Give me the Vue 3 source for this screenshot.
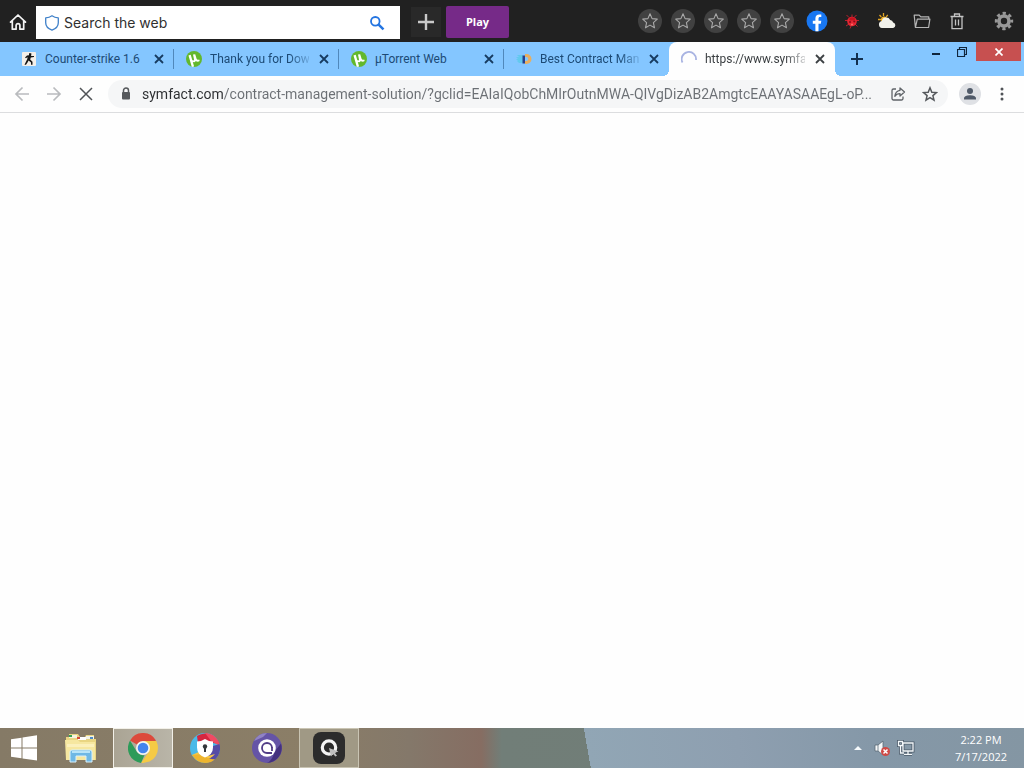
<script setup>
import { ref } from 'vue'

const address = ref('symfact.com/contract-management-solution/?gclid=EAIaIQobChMIrOutnMWA-QIVgDizAB2AmgtcEAAYASAAEgL-oP...')
const query = ref('')

const tabs = [
  { icon: 'cs', title: 'Counter-strike 1.6' },
  { icon: 'ut', title: 'Thank you for Dow', fade: true },
  { icon: 'ut', title: 'µTorrent Web' },
  { icon: 'bc', title: 'Best Contract Man', fade: true },
  { icon: 'load', title: 'https://www.symfa', fade: true, active: true },
]
</script>

<template>
  <div class="screen">
    <header class="launcher">
      <button class="home" aria-label="Home">
        <svg width="18" height="18" viewBox="0 0 18 18" fill="none" stroke="#f4f4f4" stroke-width="1.7" stroke-linejoin="round" stroke-linecap="round">
          <path d="M1.5 9.2 9 2l7.500 7.200M3.300 8v8.200h3.800v-3.700a1.900 1.900 0 0 1 3.800 0v3.700h3.800V8" />
        </svg>
      </button>
      <form class="search" @submit.prevent>
        <svg width="16" height="18" viewBox="0 0 16 18" fill="none" stroke="#3f80c9" stroke-width="1.300" stroke-linejoin="round">
          <path d="M8 1.800c2 1.500 4 2 6.300 2.100v4.800c0 3.400-2.500 6-6.300 7.500-3.800-1.500-6.300-4.100-6.300-7.500V3.900C4 3.800 6 3.300 8 1.800z" />
        </svg>
        <input v-model="query" type="text" aria-label="Search the web" placeholder="Search the web" />
        <button aria-label="Search">
          <svg width="16" height="16" viewBox="0 0 16 16" fill="none" stroke="#2374e1">
            <circle cx="6.300" cy="6.300" r="4.300" stroke-width="1.800" />
            <path d="m9.600 9.600 4.900 4.700" stroke-width="2.500" />
          </svg>
        </button>
      </form>
      <button class="add" aria-label="Add">
        <svg width="18" height="18" viewBox="0 0 18 18" stroke="#c9c9c9" stroke-width="2.400"><path d="M9 1v16M1 9h16" /></svg>
      </button>
      <button class="play">Play</button>

      <div class="favourites">
        <button v-for="n in 5" :key="n" class="round" :aria-label="'Favourite ' + n">
          <svg width="18" height="18" viewBox="0 0 18 18" fill="none" stroke="#a9a9a9" stroke-width="1.100" stroke-linejoin="round">
            <path d="m9 1.800 2.100 4.800 5.200.5-3.900 3.500 1.100 5.200L9 13.100l-4.500 2.700 1.100-5.200-3.900-3.500 5.200-.5z" />
          </svg>
        </button>
      </div>
      <div class="shortcuts">
        <button aria-label="Facebook">
          <svg width="22" height="22" viewBox="0 0 22 22">
            <circle cx="11" cy="11" r="10.500" fill="#1877f2" />
            <path d="M9.400 21.300v-7.500H6.800v-3h2.600V8.500c0-2.700 1.500-4.100 3.900-4.100 1 0 2 .2 2 .2v2.500h-1.200c-1.200 0-1.600.7-1.600 1.500v2.200h2.800l-.5 3h-2.300v7.500z" fill="#fff" />
          </svg>
        </button>
        <button aria-label="Ladybug game">
          <svg width="18" height="18" viewBox="0 0 18 18">
            <path d="m3.500 3 2.500 2.500m7.500-2.500L11 5.500M2 8.500h3m8 0h3M3 14l3-2m6 0 2.500 2.500M8 14l-1 2.500M9 2.500V5" stroke="#b8222e" stroke-width="1" fill="none" />
            <circle cx="9" cy="9.500" r="4.800" fill="#e32633" />
            <path d="M6 7a4 4 0 0 1 6.500 0L11 8.500H7z" fill="#c5121e" />
            <circle cx="7" cy="10" r="1.100" fill="#8d0d18" /><circle cx="11.300" cy="9.500" r="1.100" fill="#8d0d18" /><circle cx="9" cy="12.500" r="1" fill="#ff6d65" />
          </svg>
        </button>
        <button aria-label="Weather">
          <svg width="20" height="18" viewBox="0 0 20 18">
            <path d="M6.500 1v3M2.500 3l1.800 2M1 7.500h3M10.700 2.800 9.200 5M3 12l1.500-1.500" stroke="#e3a521" stroke-width="1.300" />
            <circle cx="7" cy="7.500" r="3" fill="#f3b72c" />
            <path d="M5 16a3.500 3.500 0 0 1-.2-6.900A4.500 4.500 0 0 1 13.200 8a4 4 0 0 1 3 2.400 2.900 2.900 0 0 1 0 5.600z" fill="#f1f1ea" />
          </svg>
        </button>
        <button aria-label="Files">
          <svg width="20" height="18" viewBox="0 0 20 18" fill="none" stroke="#b5b5b5" stroke-width="1.200" stroke-linejoin="round">
            <path d="M3.400 15.500 2.200 3.100h5l1.600 1.800h8v2.300M3.400 15.500h13.200l1.300-8.300H5.300z" />
          </svg>
        </button>
        <button aria-label="Trash">
          <svg width="18" height="20" viewBox="0 0 18 20" fill="none" stroke="#c4c4c4" stroke-width="1.300">
            <path d="M2.500 5.500h13M6.500 5.500V3h5v2.500M4 5.500v12.200h10V5.500M7.500 8.500v6m3-6v6" />
          </svg>
        </button>
      </div>
      <button class="gear" aria-label="Settings">
        <svg width="20" height="20" viewBox="0 0 20 20" fill="none" stroke="#979797">
          <circle cx="10" cy="10" r="5" stroke-width="3.600" />
          <circle cx="10" cy="10" r="7.700" stroke-width="3" stroke-dasharray="3.200 2.848" stroke-dashoffset="1.600" />
        </svg>
      </button>
    </header>

    <nav class="tabs" aria-label="Tabs">
      <div v-for="(tab, i) in tabs" :key="i" class="tab" :class="{ active: tab.active, before: i === tabs.length - 2 }">
        <svg v-if="tab.icon === 'cs'" class="fav" viewBox="0 0 16 16">
          <rect x="1" y="1" width="14" height="14" rx="1" fill="#f4efe9" />
          <path d="M8 2.300h2.300v2L9.800 5H13v1l-3.200.4-.6 2 2.300 2.300v3H10v-2.300L7.600 9.500 6.500 11.500 5 13.700H3.500l1.700-3.500L6.300 8l.2-2L5 7.300 4 6.500 6 4.600l2-.3z" fill="#151515" />
        </svg>
        <svg v-else-if="tab.icon === 'ut'" class="fav" viewBox="0 0 16 16">
          <circle cx="8" cy="8" r="8" fill="#63b82d" />
          <path d="M2.500 4.500 4.700 3.800l1.500 5c.3 1 1.900.8 1.800-.4L7 3.500l2.200-.3 1.400 4.500c.4 1.200 1.400 1.300 2.600.7l.5 1.600c-1.500 1-3 .8-3.900-.1-.6 1.200-1.800 1.600-3 1.200l1.300 4.500-2.300.3z" fill="#fff" />
        </svg>
        <svg v-else-if="tab.icon === 'bc'" class="fav" viewBox="0 0 16 16">
          <path d="M7 4H1l2 2H0l2 2H0l2 2H1l2 2h4z" fill="#62c9ee" />
          <path d="M9 3h1.500a5 5 0 0 1 0 10H9v-3h1.300a2 2 0 0 0 0-4H9z" fill="#e8ae5f" />
          <path d="M6.500 4.500h2.500v8H6.500z" fill="#27408c" />
        </svg>
        <svg v-else class="fav" viewBox="0 0 16 16" fill="none" stroke="#a9b4e2" stroke-width="1.800">
          <path d="M1.500 11.500A7.200 7.200 0 1 1 15 9" />
        </svg>
        <a href="#" class="title" :class="{ fade: tab.fade }">{{ tab.title }}</a>
        <button class="close" aria-label="Close tab">
          <svg width="10" height="10" viewBox="0 0 10 10" stroke="currentColor" stroke-width="1.800"><path d="m1 1 8 8M9 1 1 9" /></svg>
        </button>
      </div>
      <button class="newtab" aria-label="New tab">
        <svg width="12" height="12" viewBox="0 0 12 12" stroke="#12304f" stroke-width="2"><path d="M6 0v12M0 6h12" /></svg>
      </button>
      <div class="window">
        <button aria-label="Minimize"><svg width="10" height="10" viewBox="0 0 10 10" stroke="#10263d" stroke-width="2"><path d="M1 7h8" /></svg></button>
        <button aria-label="Restore"><svg width="10" height="10" viewBox="0 0 10 10" fill="none" stroke="#10263d"><path d="M.5 2.500h7v7h-7zM2.500 2.500v-2h7v7h-2" stroke-width="1.200" /></svg></button>
        <button class="quit" aria-label="Close"><svg width="8" height="8" viewBox="0 0 8 8" stroke="#fff" stroke-width="1.700"><path d="m.5.5 7 7m0-7-7 7" /></svg></button>
      </div>
    </nav>

    <div class="toolbar">
      <button aria-label="Back"><svg width="16" height="16" viewBox="0 0 16 16" fill="none" stroke="#b9bbbe" stroke-width="1.700"><path d="M15 8H2m6.500-6.500L2 8l6.500 6.500" /></svg></button>
      <button aria-label="Forward"><svg width="16" height="16" viewBox="0 0 16 16" fill="none" stroke="#b9bbbe" stroke-width="1.700"><path d="M1 8h13M7.500 1.500 14 8l-6.500 6.500" /></svg></button>
      <button aria-label="Stop"><svg width="14" height="14" viewBox="0 0 14 14" stroke="#505357" stroke-width="1.500"><path d="m1 1 12 12M13 1 1 13" /></svg></button>
      <div class="omnibox">
        <svg class="lock" width="12" height="14" viewBox="0 0 12 14"><path d="M3.500 6V3.500a2.500 2.500 0 0 1 5 0V6" fill="none" stroke="#55585c" stroke-width="1.500" /><rect x="2" y="5" width="8" height="7.500" rx="1" fill="#55585c" /></svg>
        <input v-model="address" type="text" aria-label="Address" spellcheck="false" />
        <button aria-label="Share">
          <svg width="16" height="16" viewBox="0 0 16 16" fill="none" stroke="#5f6368" stroke-width="1.300" stroke-linejoin="round"><path d="M6 3H3.500A1.500 1.500 0 0 0 2 4.500v8A1.500 1.500 0 0 0 3.500 14h8a1.500 1.500 0 0 0 1.500-1.500V10.500M10 2l4.500 4L10 10V7.700C7.500 7.700 6 8.500 4.800 10.300 5.200 7.200 6.700 4.700 10 4.300z" /></svg>
        </button>
        <button aria-label="Bookmark">
          <svg width="16" height="16" viewBox="0 0 16 16" fill="none" stroke="#55585c" stroke-width="1.500"><path d="m8 1.800 1.800 4.400 4.700.4-3.600 3 1.100 4.600L8 11.700l-4 2.500 1.100-4.600-3.600-3 4.700-.4z" /></svg>
        </button>
      </div>
      <button class="profile" aria-label="Profile">
        <svg width="22" height="22" viewBox="0 0 22 22"><circle cx="11" cy="11" r="11" fill="#dfe1e5" /><circle cx="11" cy="8" r="3" fill="#505a69" /><path d="M5 16.500v-1.200C5 13 8.500 12.200 11 12.200s6 .8 6 3.100v1.200z" fill="#505a69" /></svg>
      </button>
      <button aria-label="Menu"><svg width="4" height="14" viewBox="0 0 4 14" fill="#505357"><circle cx="2" cy="2" r="1.500" /><circle cx="2" cy="7" r="1.500" /><circle cx="2" cy="12" r="1.500" /></svg></button>
    </div>

    <main class="page"></main>

    <footer class="taskbar">
      <button class="start" aria-label="Start">
        <svg width="28" height="26" viewBox="0 0 28 26" fill="#fff"><path d="M1 4.200 11.500 2.700v9.700H1zM12.500 2.500 27 .3v12.100H12.500zM1 13.400h10.500v9.900L1 21.800zM12.500 13.400H27v12.100l-14.500-2z" /></svg>
      </button>
      <div class="apps">
        <button aria-label="File Explorer">
          <svg width="34" height="30" viewBox="0 0 34 30">
            <path d="M2 4h3V1h9l2 3h5l1-2h8v4h2v21H2z" fill="#e9d582" />
            <path d="M5 2h8v3H5z" fill="#f6f4df" /><path d="M5 2h3v2H5z" fill="#37a354" /><path d="M14 4h8v3h-8z" fill="#fff" /><path d="M13 4h3v2h-3z" fill="#d44b37" /><path d="M22 3h8v3h-8z" fill="#f4f4e9" /><path d="M26 4h3v2h-3z" fill="#4d8ac4" />
            <path d="M1 7h13l2 2h15v18H2z" fill="#f6e7a0" /><path d="M3 11h27v3H3z" fill="#fbf0bc" />
            <path d="M6 29V19q0-2 2-2h18q2 0 2 2v10h-6v-6H12v6z" fill="#6fb8e5" stroke="#d9f1fb" /><path d="M8 19h18" stroke="#b8e4f8" stroke-width="2" />
          </svg>
        </button>
        <button class="running current" aria-label="Google Chrome">
          <svg width="30" height="30" viewBox="0 0 30 30">
            <path d="M15 15 2 7.500A15 15 0 0 1 28 7.500z" fill="#dc4a3c" />
            <path d="M15 8h13.300q1.700 3.500 1.700 7-.2 9.500-8.500 13.500L15 30l-2 0 8-11.500z" fill="#f5ca45" />
            <path d="M2 7.500 9 19q3 4 7.500 3L13 30A15 15 0 0 1 2 7.500z" fill="#2d9b59" />
            <circle cx="15" cy="15" r="7" fill="#f4f5f0" /><circle cx="15" cy="15" r="5.300" fill="#4384ee" />
          </svg>
        </button>
        <button aria-label="Secure Browser">
          <svg width="30" height="30" viewBox="0 0 30 30">
            <circle cx="15" cy="15" r="15" fill="#4ab9e8" />
            <path d="M7 3a15 15 0 0 1 22.500 8L17 9 8 10z" fill="#d52740" /><path d="M15 0a15 15 0 0 1 14.800 13L21 8z" fill="#f04b62" />
            <path d="M29.500 11A15 15 0 0 1 19 29.500L14 25l9-12z" fill="#554ba5" />
            <path d="M25 21A15 15 0 0 1 2 22l9-4 7 5z" fill="#f6c747" /><path d="M2 22q5 8 13 8 7 0 10-4-7 1-13-5z" fill="#eeb52f" />
            <path d="M15 6q4 2.500 8 2.500v6q0 7-8 10-8-3-8-10v-6q4 0 8-2.500z" fill="#fff" /><circle cx="15" cy="13.500" r="2.200" fill="#34373b" /><path d="M14 14h2v5h-2z" fill="#34373b" />
          </svg>
        </button>
        <button aria-label="Chat">
          <svg width="30" height="30" viewBox="0 0 30 30">
            <circle cx="15" cy="15" r="15" fill="#6554a6" /><path d="M15 30q5-2 8-12l6-7.500A15 15 0 0 1 15 30z" fill="#44317f" /><path d="M2 8A15 15 0 0 1 15 0l-4 4z" fill="#9184c5" />
            <circle cx="15" cy="15" r="8.800" fill="#fff" /><path d="M20 15a5 5 0 1 0-5 5h5" fill="none" stroke="#513d86" stroke-width="1.800" /><path d="M20 14v4" stroke="#513d86" stroke-width="1.800" />
          </svg>
        </button>
        <button class="running" aria-label="Q Launcher">
          <svg width="32" height="32" viewBox="0 0 32 32"><rect width="32" height="32" rx="8" fill="#2c2c2c" /><circle cx="16" cy="15.500" r="6.700" fill="none" stroke="#f5f5f5" stroke-width="3.200" /><path d="m16 16 9.500 3.500-3.700 1.300 2.200 3-1.700.7-2.300-2.800-2 2.800z" fill="#bdbdbd" /></svg>
        </button>
      </div>
      <div class="tray">
        <button aria-label="Show hidden icons"><svg width="8" height="6" viewBox="0 0 8 6"><path d="M0 5 4 1l4 4z" fill="#f6fafc" /></svg></button>
        <button aria-label="Muted"><svg width="16" height="16" viewBox="0 0 16 16"><path d="M1 5h3l5-4v14l-5-4H1z" fill="#f5f7f8" stroke="#586774" stroke-width=".8" /><path d="M4 5v6" stroke="#7b8791" /><circle cx="11.500" cy="11.500" r="4.500" fill="#d04a46" /><path d="m9.500 9.500 4 4m0-4-4 4" stroke="#fff" stroke-width="1.500" /></svg></button>
        <button aria-label="Network"><svg width="18" height="16" viewBox="0 0 18 16" fill="none"><path d="M6 3h10v8H6zM11 11v3M7 14.300h8M3.500 5v8H7M1.500 1.500h4v4h-4z" stroke="#4c5c6b" stroke-width="3" /><path d="M6 3h10v8H6zM11 11v3M7 14.300h8M3.500 5v8H7M1.500 1.500h4v4h-4z" stroke="#f4f8fa" stroke-width="1.300" /></svg></button>
      </div>
      <button class="clock"><span>2:22 PM</span><span>7/17/2022</span></button>
    </footer>
  </div>
</template>

<style>
body { margin: 0; background: #fefefe; }
</style>

<style scoped>
.screen { min-height: 100vh; display: flex; flex-direction: column; overflow: hidden; font: 12px/16px Roboto, "Open Sans", sans-serif; }
button { display: flex; align-items: center; justify-content: center; flex: none; margin: 0; padding: 0; border: 0; background: none; color: inherit; font: inherit; }
input { min-width: 0; margin: 0; padding: 0; border: 0; outline: 0; background: none; }
svg { display: block; flex: none; }

.launcher { display: flex; align-items: center; height: 42px; background: #212121; }
.home { width: 36px; height: 36px; padding-top: 2px; }
.search { display: flex; align-items: center; flex: 0 1 364px; box-sizing: border-box; height: 33px; margin-top: 3px; padding: 0 14px 0 8px; gap: 4px; background: #fff; }
.search input { flex: 1; height: 24px; font: 14px/20px Inter, sans-serif; color: #303030; }
.search input::placeholder { color: #303030; opacity: 1; }
.search button { width: 18px; height: 24px; }
.add { width: 30px; height: 30px; margin-left: 11px; margin-top: 2px; background: #292929; }
.play { width: 63px; height: 32px; margin-left: 5px; margin-top: 2px; border-radius: 2px; background: #762a88; color: #fff; font: 700 11px/16px "Open Sans", sans-serif; }
.favourites { display: flex; gap: 9px; margin-left: auto; }
.round { width: 24px; height: 24px; border-radius: 50%; background: #414141; }
.shortcuts { display: flex; gap: 11px; margin-left: 11px; }
.shortcuts button { width: 24px; height: 24px; }
.gear { width: 24px; height: 24px; margin: 0 8px 0 23px; }

.tabs { display: flex; height: 34px; padding-left: 9px; background: #84c6ff; color: #1c4a75; }
.tab { position: relative; display: flex; align-items: center; flex: 0 1 165px; box-sizing: border-box; min-width: 0; padding: 0 7px 0 12px; background: linear-gradient(#5088bb, #5088bb) right center / 1px 20px no-repeat; }
.tab.before { background: none; }
.tab.active { flex-basis: 166px; border-radius: 8px 8px 0 0; background: #fefefe; color: #3c4043; }
.tab.active::before, .tab.active::after { content: ""; position: absolute; bottom: 0; width: 6px; height: 6px; }
.tab.active::before { right: 100%; background: radial-gradient(circle at 0 0, transparent 6px, #fefefe 6px); }
.tab.active::after { left: 100%; background: radial-gradient(circle at 100% 0, transparent 6px, #fefefe 6px); }
.fav { width: 16px; height: 16px; margin-right: 8px; }
.title { flex: 1; min-width: 0; overflow: hidden; white-space: nowrap; color: inherit; text-decoration: none; }
.title.fade { mask-image: linear-gradient(to right, #000 80%, rgba(0, 0, 0, 0.2) 100%); }
.close { width: 16px; height: 16px; margin-left: 7px; color: #173b60; }
.active .close { color: #3c4043; }
.newtab { width: 28px; margin-left: 8px; }
.window { display: flex; align-items: flex-start; margin-left: auto; padding-right: 3px; }
.window button { width: 26px; height: 19px; }
.window .quit { width: 45px; margin-left: 1px; background: #c75050; }

.toolbar { display: flex; align-items: center; height: 36px; padding: 0 6px; border-bottom: 1px solid #dcdddf; background: #fefefe; }
.toolbar > button { width: 32px; height: 28px; }
.omnibox { display: flex; align-items: center; flex: 1; min-width: 0; height: 28px; margin-left: 6px; padding: 0 2px 0 12px; border-radius: 14px; background: #f5f6f7; }
.omnibox input { flex: 1; height: 22px; margin: 0 8px 0 10px; font: 14px/20px Roboto, "Open Sans", sans-serif; color: #6b6f74; text-overflow: ellipsis; background: linear-gradient(to right, #2b2d30 81px, #6b6f74 81px); background-clip: text; -webkit-text-fill-color: transparent; }
.omnibox button { width: 32px; height: 28px; }
.toolbar .profile { margin-left: 6px; }

.page { flex: 1; background: #fefefe; }

.taskbar { display: flex; align-items: center; height: 40px; color: #fff; background: linear-gradient(80deg, transparent 57.3%, #91a6b5 57.3%, #8e9fb0 72%, #8598a8 85%, #8496a3 100%), linear-gradient(to right, #857a66 0%, #8b7e67 30%, #84786a 40%, #866d62 47%, #717e78 49%, #717b75 100%); }
.start { width: 48px; height: 40px; }
.apps { display: flex; gap: 2px; margin-left: 3px; }
.apps button { width: 60px; height: 40px; }
.apps .running { box-sizing: border-box; border: 1px solid #c9c4b3; background: #a09985; }
.apps .current { border-color: #f2f0e8; background: linear-gradient(to right, #aaa494, #b9b5a8); }
.tray { display: flex; margin-left: auto; }
.tray button { width: 24px; height: 40px; }
.clock { flex-direction: column; width: 86px; margin-left: 20px; font: 11px/17px "Open Sans", sans-serif; }
</style>
